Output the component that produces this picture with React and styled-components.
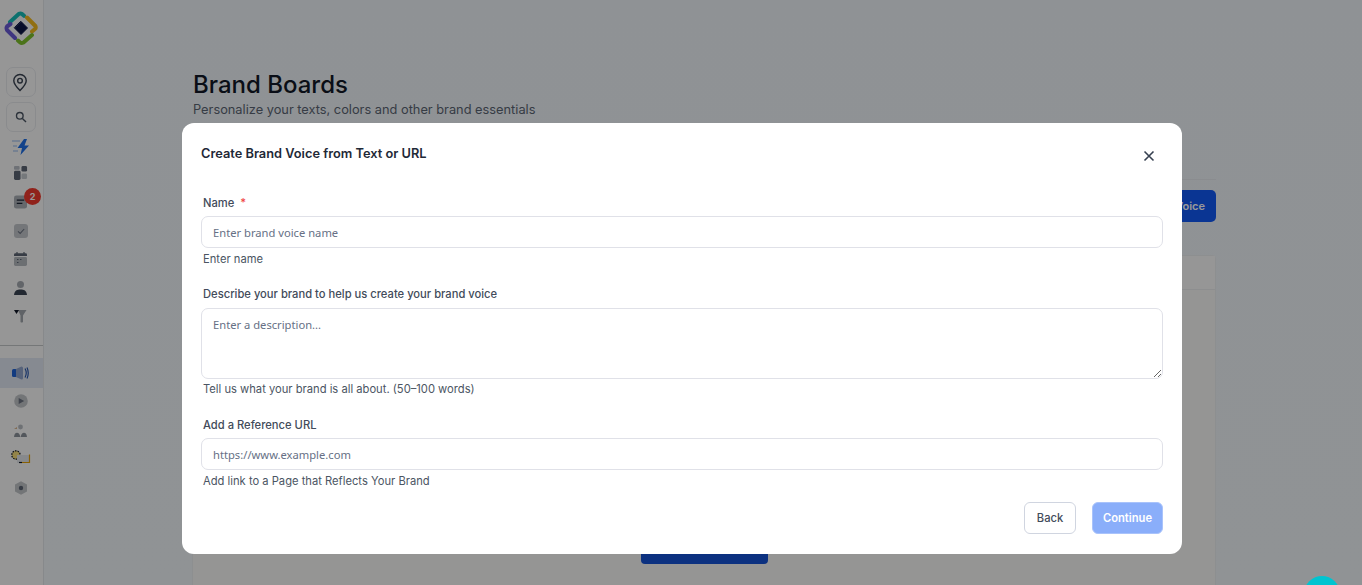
import React from "react";
import styled, { createGlobalStyle } from "styled-components";

const Global = createGlobalStyle`
  html, body { margin: 0; padding: 0; height: 100%; overflow: hidden; }
  body { font-family: Inter, "Liberation Sans", sans-serif; }
  * { box-sizing: border-box; }
`;

const Page = styled.div`
  display: flex;
  height: 585px;
  width: 1362px;
  overflow: hidden;
`;

const Sidebar = styled.aside`
  flex: 0 0 44px;
  height: 100%;
  background: #fbfbfb;
  border-right: 1px solid #e2e4e8;
  display: flex;
  flex-direction: column;
  align-items: stretch;
  padding-top: 11px;
`;

const LogoSlot = styled.div`
  display: flex;
  justify-content: center;
  padding-right: 2px;
  height: 56px;
`;

const NavBox = styled.div`
  width: 30px;
  height: 30px;
  margin: 0 0 5px 6px;
  padding-right: ${(p) => p.$shift || 0}px;
  border: 1px solid #e6e8ec;
  border-radius: 7px;
  display: flex;
  align-items: center;
  justify-content: center;
`;

const NavIcon = styled.div`
  position: relative;
  height: ${(p) => p.$h || 29}px;
  display: flex;
  align-items: center;
  justify-content: center;
  padding-right: 2px;
`;

const Badge = styled.span`
  position: absolute;
  top: -1px;
  left: 24px;
  width: 17px;
  height: 17px;
  border-radius: 50%;
  background: #f03a2e;
  color: #fff;
  font-size: 9px;
  font-weight: 700;
  display: flex;
  align-items: center;
  justify-content: center;
`;

const Divider = styled.hr`
  margin: 18px 0 12px;
  border: 0;
  border-top: 1px solid #c4c6c9;
  width: 100%;
`;

const ActiveRow = styled(NavIcon)`
  background: #e0e6f2;
  height: 30px;
  margin-bottom: 0;
`;

const Main = styled.main`
  flex: 1;
  min-width: 0;
  height: 100%;
  overflow: hidden;
  background: linear-gradient(180deg, #eff4f8 0%, #f0f5f8 100%);
  padding: 71px 146px 0 148px;
`;

const Title = styled.h1`
  margin: 0 0 0 1px;
  font-size: 24px;
  line-height: 27px;
  font-weight: 500;
  color: #111827;
`;

const Subtitle = styled.p`
  margin: 4px 0 0 1px;
  font-size: 12.8px;
  line-height: 16px;
  color: #5b6573;
`;

const Rule = styled.div`
  margin-top: 61px;
  height: 1px;
  background: #e6eaee;
`;

const ActionRow = styled.div`
  display: flex;
  justify-content: flex-end;
  margin-top: 10px;
`;

const PrimaryBehind = styled.div`
  width: 160px;
  height: 32px;
  border-radius: 5px;
  background: #1259f5;
  color: #fff;
  font-size: 11px;
  font-weight: 600;
  display: flex;
  align-items: center;
  justify-content: flex-end;
  padding-right: 11px;
`;

const Card = styled.section`
  margin-top: 33px;
  height: 340px;
  background: #f9f8f7;
  border: 1px solid #eceef0;
  border-radius: 4px 4px 0 0;
  display: flex;
  flex-direction: column;
  align-items: center;
`;

const CardHead = styled.div`
  align-self: stretch;
  height: 34px;
  background: #fbfbfb;
  border-bottom: 1px solid #ecedef;
`;

const CardButton = styled.div`
  margin-top: 234px;
  width: 127px;
  height: 40px;
  border-radius: 4px;
  background: #1553d6;
`;

const Overlay = styled.div`
  position: fixed;
  inset: 0;
  background: rgba(0, 0, 0, 0.4);
  padding: 123px 180px 0 182px;
`;

const Modal = styled.div`
  width: 1000px;
  height: 431px;
  background: #fff;
  border-radius: 12px;
  padding: 23px 19px 0 19px;
  display: flex;
  flex-direction: column;
`;

const ModalHead = styled.div`
  display: flex;
  justify-content: space-between;
  align-items: flex-start;
  height: 50px;
`;

const ModalTitle = styled.h2`
  margin: 0;
  font-size: 12.8px;
  line-height: 15px;
  font-weight: 600;
  color: #1f2937;
`;

const CloseButton = styled.button`
  border: 0;
  padding: 0;
  background: none;
  color: #374151;
  width: 16px;
  height: 16px;
  margin: 2px 6px 0 0;
  display: flex;
  align-items: center;
  justify-content: center;
`;

const Field = styled.div`
  display: flex;
  flex-direction: column;
  margin-bottom: ${(p) => p.$gap}px;
`;

const Label = styled.label`
  font-size: 11.2px;
  line-height: 14px;
  font-weight: 500;
  color: #424b5a;
  margin: 0 0 ${(p) => p.$mb || 6}px 2px;
`;

const Star = styled.span`
  color: #ef4444;
  margin-left: 3px;
`;

const Input = styled.input`
  height: 32px;
  width: 100%;
  margin: 0;
  border: 1px solid #e0e1e8;
  border-radius: 7px;
  padding: 0 11px;
  font: 400 11.2px "Noto Sans", Inter, sans-serif;
  outline: none;
  background: #fff;
  &::placeholder { color: #667085; opacity: 1; }
`;

const TextArea = styled.textarea`
  display: block;
  height: 71px;
  width: 100%;
  margin: 0;
  border: 1px solid #e0e1e8;
  border-radius: 7px;
  padding: 8px 11px;
  font: 400 11.2px/16px "Noto Sans", Inter, sans-serif;
  outline: none;
  background: #fff;
  &::placeholder { color: #667085; opacity: 1; }
`;

const Help = styled.div`
  font-size: 11.2px;
  line-height: 14px;
  color: #4b5563;
  margin: ${(p) => p.$mt || 4}px 0 0 2px;
`;

const Footer = styled.div`
  display: flex;
  justify-content: flex-end;
  gap: 16px;
`;

const Button = styled.button`
  height: 32px;
  width: ${(p) => p.$w}px;
  border-radius: 6px;
  font: ${(p) => (p.$primary ? 600 : 500)} 11.2px Inter, sans-serif;
  padding: 0;
  background: ${(p) => (p.$primary ? "#8aaefa" : "#fff")};
  color: ${(p) => (p.$primary ? "#fff" : "#424b5a")};
  border: 1px solid ${(p) => (p.$primary ? "#a9c3fb" : "#d0d5e0")};
`;

const Chat = styled.div`
  position: fixed;
  left: 1304px;
  top: 576px;
  width: 36px;
  height: 36px;
  border-radius: 50%;
  background: #00c4d0;
`;

const Logo = () => (
  <svg width="34" height="34" viewBox="0 0 34 34" fill="none" strokeWidth="4" strokeLinecap="round" strokeLinejoin="round">
    <path d="M6 11 L15 2.8 Q16.5 2 18 3 L20 4.8" stroke="#17bdb8" />
    <path d="M23 6.5 L31.4 15 Q32.2 17 31 18 L28 20.5" stroke="#f2b91f" />
    <path d="M28 24 L19.5 31.5 Q17.5 32.4 16 31.4 L14 29.5" stroke="#7ec02c" />
    <path d="M11 27 L3 19 Q2 17 3 15.5 L6.5 13" stroke="#6a5bd6" />
    <path d="M17 10.5 L23.5 17 L17 23.5 L10.5 17 Z" fill="#0c1445" stroke="#0c1445" strokeWidth="1" />
  </svg>
);

const PinIcon = () => (
  <svg width="16" height="19" viewBox="0 0 18 20" fill="none" stroke="#3a4352" strokeWidth="1.6">
    <path d="M9 19 C 5 15 2 12 2 8 A7 7 0 0 1 16 8 C 16 12 13 15 9 19 Z" />
    <circle cx="9" cy="8" r="2.6" />
  </svg>
);

const SearchIcon = () => (
  <svg width="12" height="12" viewBox="0 0 12 12" fill="none" stroke="#4b5563" strokeWidth="1.4">
    <circle cx="4.8" cy="4.8" r="3.3" />
    <path d="M7.4 7.4 L11 11" />
  </svg>
);

const ZapIcon = () => (
  <svg width="20" height="16" viewBox="0 0 20 16">
    <path d="M13 0 L6.5 9 H11 L9.5 16 L18 6.5 H13.5 L16 0 Z" fill="#1f6fe6" />
    <path d="M1 2 H9 M2 7 H6 M2 12 H7" stroke="#b4cbef" strokeWidth="1.5" />
  </svg>
);

const GridIcon = () => (
  <svg width="14" height="14" viewBox="0 0 15 15">
    <rect x="0" y="5" width="7" height="10" rx="1.5" fill="#5c6573" />
    <rect x="0" y="0" width="6" height="4" rx="1" fill="#b8bdc5" />
    <rect x="8" y="0" width="6" height="6" rx="1.5" fill="#5c6573" />
    <rect x="8" y="8" width="6" height="6" rx="1.5" fill="#c4c8ce" />
  </svg>
);

const DocIcon = () => (
  <svg width="13" height="14" viewBox="0 0 14 14">
    <rect width="14" height="14" rx="2.5" fill="#a8adb5" />
    <path d="M3 5 H11 M3 8.5 H9" stroke="#1f2937" strokeWidth="1.3" />
  </svg>
);

const CheckIcon = () => (
  <svg width="14" height="14" viewBox="0 0 14 14" fill="none">
    <rect width="14" height="14" rx="3" fill="#c2c5ca" />
    <path d="M4 7.3 L6.2 9.4 L10.2 5" stroke="#6b7280" strokeWidth="1.1" />
  </svg>
);

const CalendarIcon = () => (
  <svg width="13" height="14" viewBox="0 0 13 14">
    <path d="M0 4 V2.5 Q0 1.2 1.4 1.2 H11.6 Q13 1.2 13 2.5 V4 Z" fill="#5c6573" />
    <rect x="0" y="5" width="13" height="9" rx="1.4" fill="#b5b9bf" />
    <path d="M3 0 V2 M10 0 V2" stroke="#5c6573" strokeWidth="1.2" />
    <path d="M3 7.5 H4.5 M6 7.5 H7.5 M3 10.5 H4.5" stroke="#5c6573" strokeWidth="1" />
  </svg>
);

const PersonIcon = () => (
  <svg width="13" height="14" viewBox="0 0 13 14">
    <circle cx="6.5" cy="3.5" r="3.5" fill="#a4a9b0" />
    <path d="M0 14 C0.5 9.5 3 8.4 6.5 8.4 C10 8.4 12.5 9.5 13 14 Z" fill="#3a4352" />
  </svg>
);

const FunnelIcon = () => (
  <svg width="13" height="14" viewBox="0 0 13 14">
    <path d="M4 1 H12.5 L9 6.5 V13 Q7.5 14 6.5 13 V6.5 Z" fill="#a0a5ac" />
    <path d="M0 1 H5 L2.5 5 Z" fill="#111827" />
  </svg>
);

const SpeakerIcon = () => (
  <svg width="17" height="14" viewBox="0 0 17 14" fill="none">
    <rect x="0" y="3" width="5" height="8" rx="1.5" fill="#1f63d6" />
    <path d="M4 3 L9.5 0.5 Q11 0.5 11 2 V12 Q11 13.5 9.5 13.5 L4 11 Z" fill="#8fa3cc" />
    <path d="M13 2.5 Q15.5 7 13 11.5 M15 1.5 Q17.5 7 15 12.5" stroke="#1f4fa8" strokeWidth="1.1" />
  </svg>
);

const PlayIcon = () => (
  <svg width="14" height="14" viewBox="0 0 14 14">
    <circle cx="7" cy="7" r="6.8" fill="#c0c3c7" />
    <path d="M4.7 4 L10.2 7 L4.7 10 Z" fill="#6b7280" />
  </svg>
);

const PeopleIcon = () => (
  <svg width="13" height="13" viewBox="0 0 13 13">
    <circle cx="6.5" cy="3" r="2.4" fill="#b8bcc2" />
    <path d="M0 5 L3 3 L3 5 H5 Z" fill="#d8b48c" />
    <path d="M0 13 Q0.5 8.8 3 8.8 Q5.5 8.8 6.3 13 Z M6.7 13 Q7.5 8.8 10 8.8 Q12.5 8.8 13 13 Z" fill="#8b919a" />
  </svg>
);

const MixedIcon = () => (
  <svg width="20" height="14" viewBox="0 0 20 14" fill="none">
    <circle cx="5" cy="5" r="4.2" stroke="#111827" strokeWidth="1.2" strokeDasharray="1.6 1" fill="#f5dd7a" />
    <rect x="6" y="5" width="13" height="8" fill="#e1e5ea" />
    <path d="M18.5 4.5 V12.5 H10" stroke="#e3a008" strokeWidth="1.2" />
    <path d="M8 12.5 H11" stroke="#111827" strokeWidth="1.2" />
  </svg>
);

const HexIcon = () => (
  <svg width="14" height="14" viewBox="0 0 14 14">
    <path d="M7 0.3 L13 3.6 V10.4 L7 13.7 L1 10.4 V3.6 Z" fill="#c0c3c7" />
    <circle cx="7" cy="7" r="2.2" fill="#5c6573" />
  </svg>
);

const CloseIcon = () => (
  <svg width="12" height="12" viewBox="0 0 12 12" fill="none" stroke="currentColor" strokeWidth="1.6">
    <path d="M1.5 1.5 L10.5 10.5 M10.5 1.5 L1.5 10.5" />
  </svg>
);

export default function App() {
  return (
    <>
      <Global />
      <Page>
        <Sidebar>
          <LogoSlot><Logo /></LogoSlot>
          <NavBox $shift={3}><PinIcon /></NavBox>
          <NavBox><SearchIcon /></NavBox>
          <NavIcon $h={20}><ZapIcon /></NavIcon>
          <NavIcon $h={32}><GridIcon /></NavIcon>
          <NavIcon $h={26}><DocIcon /><Badge>2</Badge></NavIcon>
          <NavIcon $h={32}><CheckIcon /></NavIcon>
          <NavIcon $h={24}><CalendarIcon /></NavIcon>
          <NavIcon $h={34}><PersonIcon /></NavIcon>
          <NavIcon $h={22}><FunnelIcon /></NavIcon>
          <Divider />
          <ActiveRow><SpeakerIcon /></ActiveRow>
          <NavIcon $h={26}><PlayIcon /></NavIcon>
          <NavIcon $h={32}><PeopleIcon /></NavIcon>
          <NavIcon $h={22}><MixedIcon /></NavIcon>
          <NavIcon $h={40}><HexIcon /></NavIcon>
        </Sidebar>
        <Main>
          <Title>Brand Boards</Title>
          <Subtitle>Personalize your texts, colors and other brand essentials</Subtitle>
          <Rule />
          <ActionRow><PrimaryBehind>Create Brand Voice</PrimaryBehind></ActionRow>
          <Card>
            <CardHead />
            <CardButton />
          </Card>
        </Main>
      </Page>
      <Overlay>
        <Modal>
          <ModalHead>
            <ModalTitle>Create Brand Voice from Text or URL</ModalTitle>
            <CloseButton aria-label="Close"><CloseIcon /></CloseButton>
          </ModalHead>
          <Field $gap={21}>
            <Label>Name <Star>*</Star></Label>
            <Input placeholder="Enter brand voice name" />
            <Help>Enter name</Help>
          </Field>
          <Field $gap={22}>
            <Label $mb={7}>Describe your brand to help us create your brand voice</Label>
            <TextArea placeholder="Enter a description..." />
            <Help $mt={3}>Tell us what your brand is all about. (50–100 words)</Help>
          </Field>
          <Field $gap={14}>
            <Label>Add a Reference URL</Label>
            <Input placeholder="https://www.example.com" />
            <Help>Add link to a Page that Reflects Your Brand</Help>
          </Field>
          <Footer>
            <Button $w={52}>Back</Button>
            <Button $w={71} $primary>Continue</Button>
          </Footer>
        </Modal>
      </Overlay>
      <Chat />
    </>
  );
}
